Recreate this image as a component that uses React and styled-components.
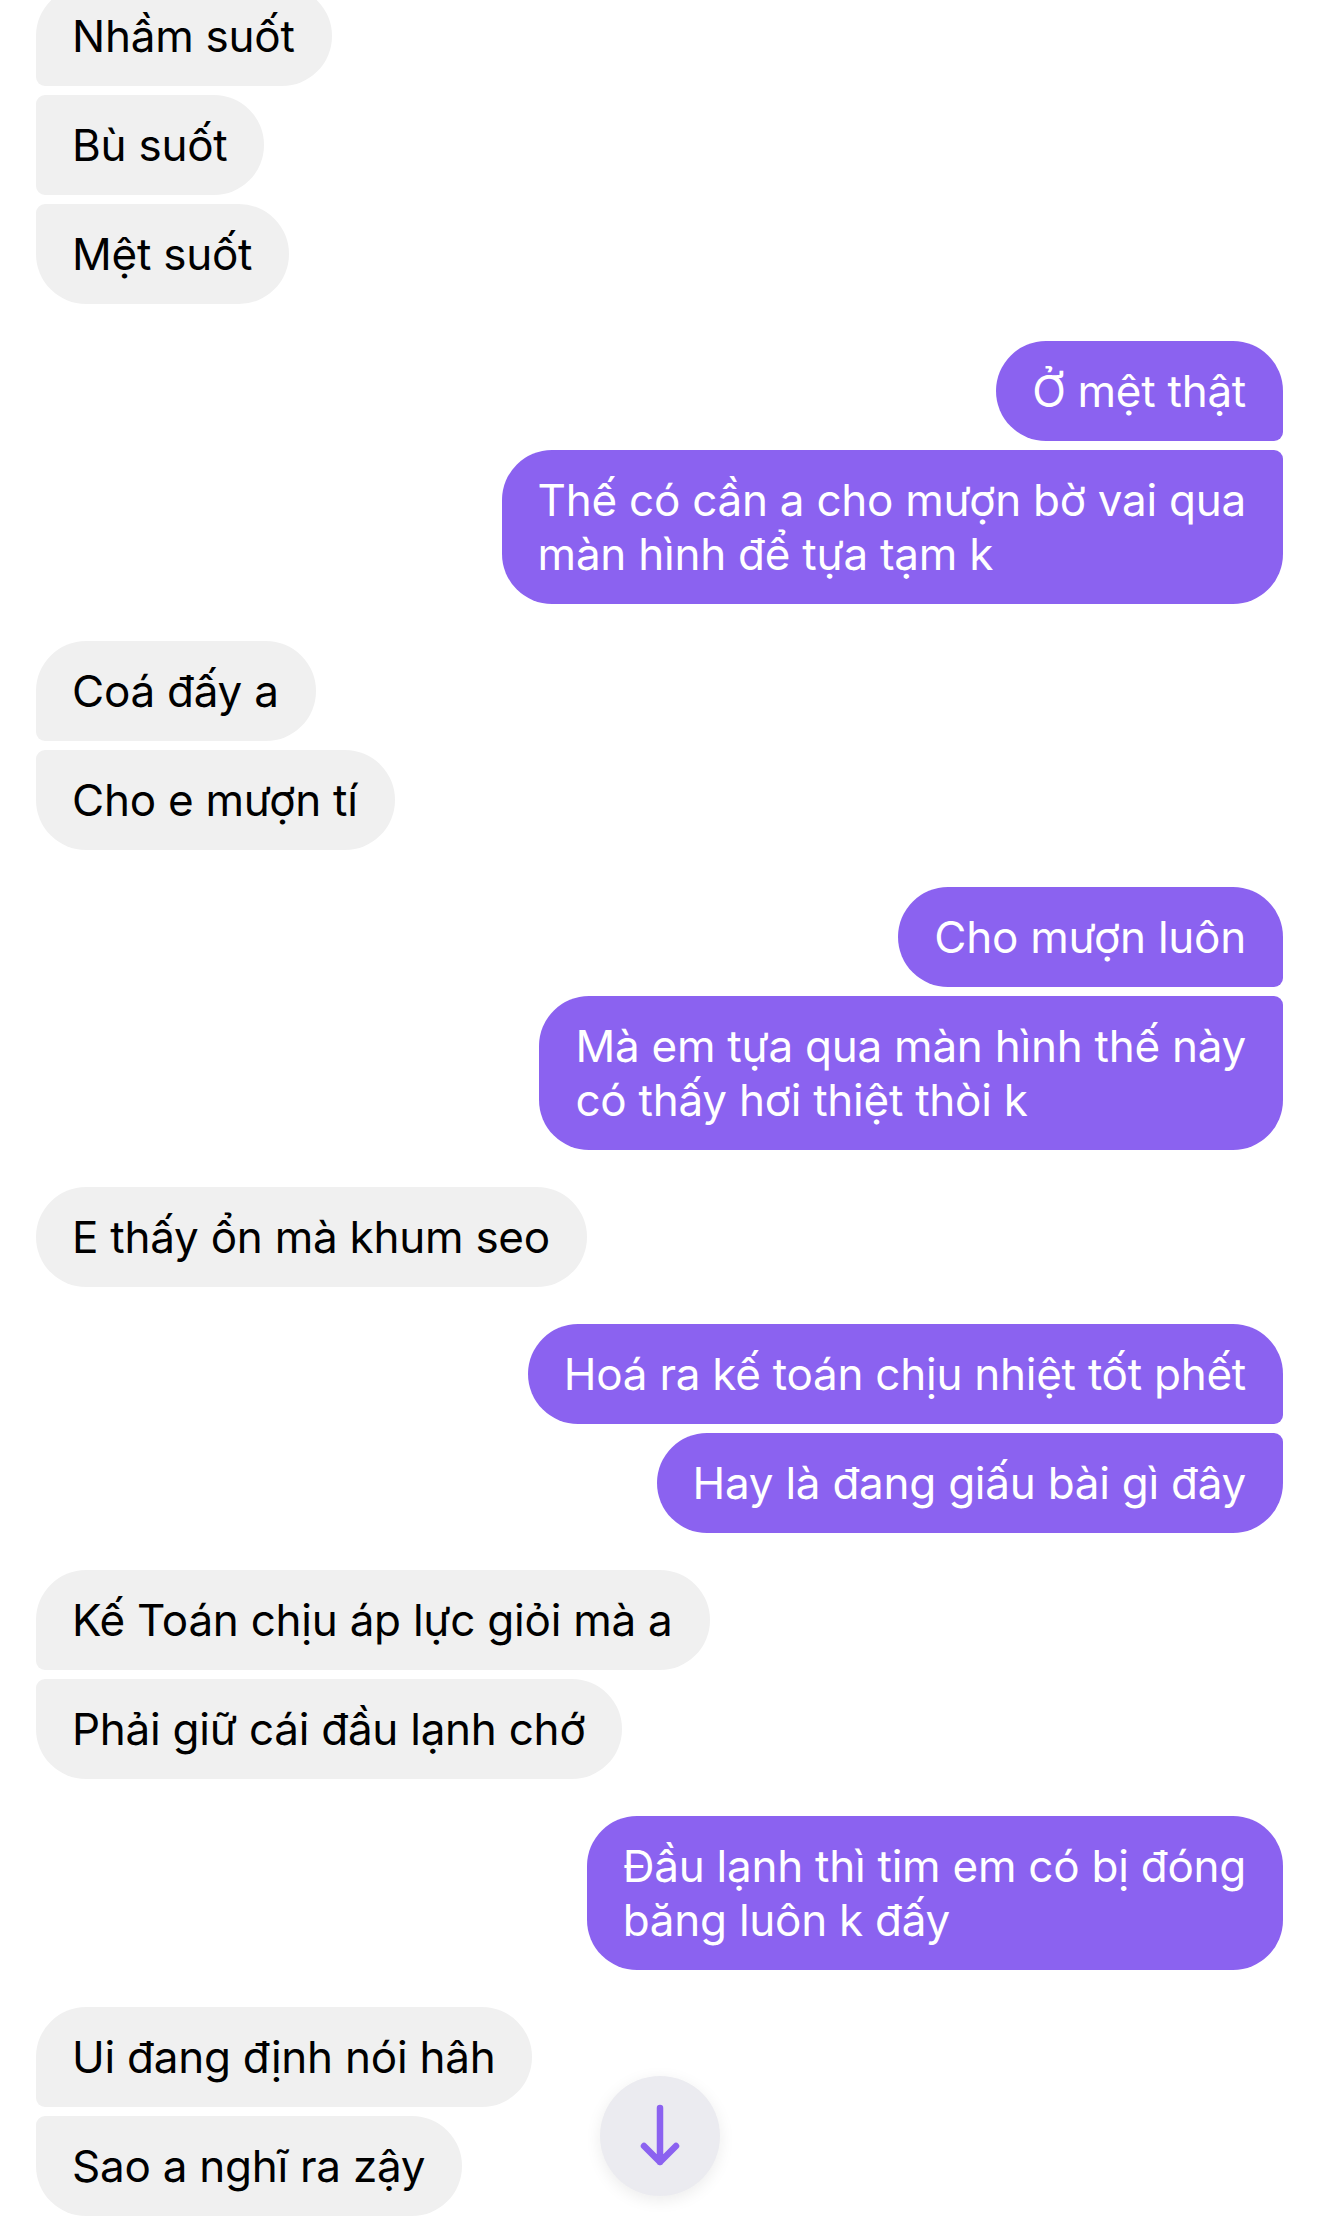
import React from "react";
import styled, { createGlobalStyle } from "styled-components";

const messages = [
  { id: 1, me: false, lines: ["Nhầm suốt"] },
  { id: 2, me: false, lines: ["Bù suốt"] },
  { id: 3, me: false, lines: ["Mệt suốt"] },
  { id: 4, me: true, lines: ["Ở mệt thật"] },
  { id: 5, me: true, lines: ["Thế có cần a cho mượn bờ vai qua", "màn hình để tựa tạm k"] },
  { id: 6, me: false, lines: ["Coá đấy a"] },
  { id: 7, me: false, lines: ["Cho e mượn tí"] },
  { id: 8, me: true, lines: ["Cho mượn luôn"] },
  { id: 9, me: true, lines: ["Mà em tựa qua màn hình thế này", "có thấy hơi thiệt thòi k"] },
  { id: 10, me: false, lines: ["E thấy ổn mà khum seo"] },
  { id: 11, me: true, lines: ["Hoá ra kế toán chịu nhiệt tốt phết"] },
  { id: 12, me: true, lines: ["Hay là đang giấu bài gì đây"] },
  { id: 13, me: false, lines: ["Kế Toán chịu áp lực giỏi mà a"] },
  { id: 14, me: false, lines: ["Phải giữ cái đầu lạnh chớ"] },
  { id: 15, me: true, lines: ["Đầu lạnh thì tim em có bị đóng", "băng luôn k đấy"] },
  { id: 16, me: false, lines: ["Ui đang định nói hâh"] },
  { id: 17, me: false, lines: ["Sao a nghĩ ra zậy"] },
];

// split into runs of consecutive messages from the same side
function groupMessages(list) {
  const groups = [];
  list.forEach((m) => {
    const last = groups[groups.length - 1];
    if (last && last.me === m.me) last.items.push(m);
    else groups.push({ me: m.me, items: [m] });
  });
  return groups;
}

function App() {
  const groups = groupMessages(messages);
  return (
    <>
      <GlobalStyle />
      <Thread>
        {groups.map((g, gi) => (
          <Group key={gi} $me={g.me}>
            {g.items.map((m, i) => (
              <Bubble
                key={m.id}
                $me={g.me}
                $joinTop={i > 0}
                $joinBottom={i < g.items.length - 1}
              >
                {m.lines.map((line, li) => (
                  <Line key={li}>{line}</Line>
                ))}
              </Bubble>
            ))}
          </Group>
        ))}
      </Thread>
      <ScrollDown aria-label="Cuộn xuống">
        <svg width="40" height="64" viewBox="0 0 40 64" fill="none">
          <path
            d="M20 4 V58 M4 42 L20 58 L36 42"
            stroke="#8b62f0"
            strokeWidth="6.5"
            strokeLinecap="round"
            strokeLinejoin="round"
          />
        </svg>
      </ScrollDown>
    </>
  );
}

const GlobalStyle = createGlobalStyle`
  body {
    margin: 0;
    background: #ffffff;
    font-family: Inter, "Noto Sans", "DejaVu Sans", sans-serif;
    overflow: hidden;
  }
`;

const Thread = styled.div`
  display: flex;
  flex-direction: column;
  gap: 37px;
  margin-top: -14px;
  padding: 0 37px 0 36px;
`;

const Group = styled.div`
  display: flex;
  flex-direction: column;
  align-items: ${(p) => (p.$me ? "flex-end" : "flex-start")};
  gap: 9px;
`;

const BIG = "50px";
const SMALL = "9px";

const Bubble = styled.div`
  box-sizing: border-box;
  padding: 23px 37px 23px 36px;
  min-height: 100px;
  font-size: 44px;
  line-height: 54px;
  letter-spacing: -0.25px;
  white-space: nowrap;
  color: ${(p) => (p.$me ? "#ffffff" : "#000000")};
  background: ${(p) => (p.$me ? "#8b62f0" : "#f0f0f0")};
  border-radius: ${(p) =>
    p.$me
      ? `${BIG} ${p.$joinTop ? SMALL : BIG} ${p.$joinBottom ? SMALL : BIG} ${BIG}`
      : `${p.$joinTop ? SMALL : BIG} ${BIG} ${BIG} ${p.$joinBottom ? SMALL : BIG}`};
`;

const Line = styled.div``;

const ScrollDown = styled.button`
  position: fixed;
  left: 50%;
  bottom: 44px;
  transform: translateX(-50%);
  width: 120px;
  height: 120px;
  border: none;
  border-radius: 50%;
  background: #ebebf0;
  box-shadow: 0 4px 16px rgba(0, 0, 0, 0.08);
  display: flex;
  align-items: center;
  justify-content: center;
  padding: 0;
  cursor: pointer;
`;

export default App;
